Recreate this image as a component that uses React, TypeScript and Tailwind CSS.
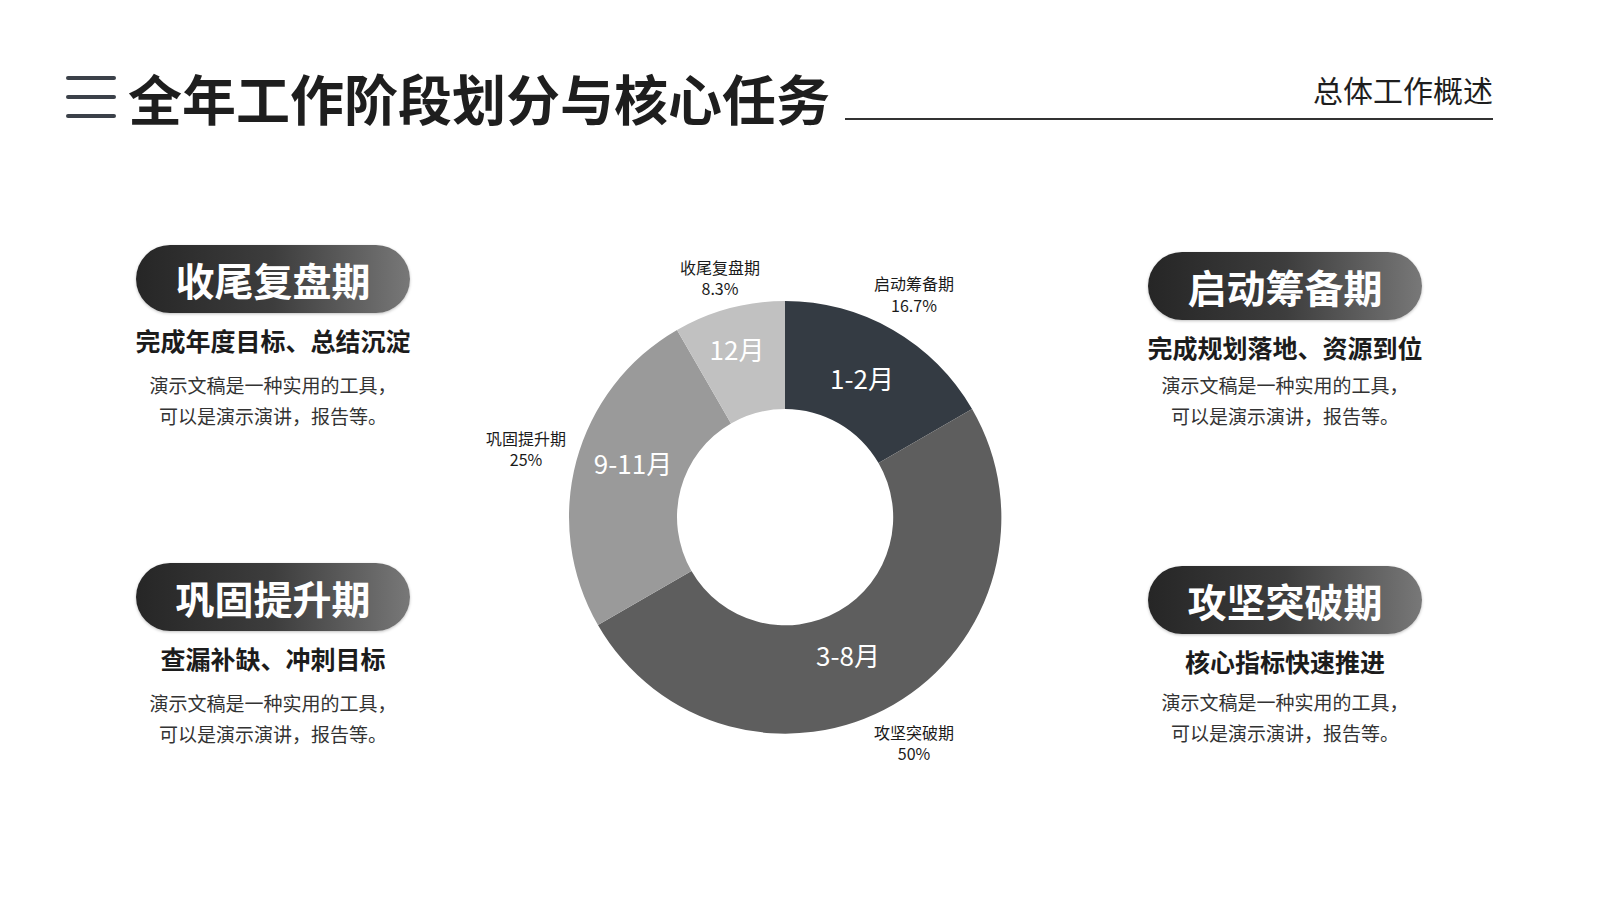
const FONT = { fontFamily: '"Noto Sans CJK SC", "Noto Sans", sans-serif' };

type Phase = {
  name: string;
  goal: string;
  pillTop: string;
  goalGap: string;
  bodyGap: string;
};

function PhaseCard({ phase }: { phase: Phase }) {
  return (
    <div className={`flex flex-col items-center ${phase.pillTop}`}>
      <div className="flex h-[68px] w-[274px] items-center justify-center rounded-full bg-linear-to-r from-[#262626] via-[#3d3d3d] to-[#787878] shadow-[0_1px_3px_rgba(0,0,0,0.25)]">
        <span className="text-[39px] font-bold leading-none text-white">{phase.name}</span>
      </div>
      <div className={`${phase.goalGap} text-[25px] font-bold leading-[26px] text-[#1c1c1c]`}>
        {phase.goal}
      </div>
      <div className={`${phase.bodyGap} text-center text-[19px] leading-[31px] text-[#333333]`}>
        <p>演示文稿是一种实用的工具，</p>
        <p>可以是演示演讲，报告等。</p>
      </div>
    </div>
  );
}

function DonutChart() {
  return (
    <svg width="640" height="560" viewBox="0 0 640 560">
      {/* 1-2月 */}
      <path d="M320 64 A216 216 0 0 1 507.06 172 L413.53 226 A108 108 0 0 0 320 172 Z" fill="#343b43" />
      {/* 3-8月 */}
      <path d="M507.06 172 A216 216 0 1 1 132.94 388 L226.47 334 A108 108 0 1 0 413.53 226 Z" fill="#5e5e5e" />
      {/* 9-11月 */}
      <path d="M132.94 388 A216 216 0 0 1 212 92.94 L266 186.47 A108 108 0 0 0 226.47 334 Z" fill="#9a9a9a" />
      {/* 12月 */}
      <path d="M212 92.94 A216 216 0 0 1 320 64 L320 172 A108 108 0 0 0 266 186.47 Z" fill="#c1c1c1" />

      <g fill="#ffffff" fontSize="26" textAnchor="middle" dominantBaseline="central">
        <text x="397" y="140">1-2月</text>
        <text x="383" y="417">3-8月</text>
        <text x="168" y="225">9-11月</text>
        <text x="272" y="111">12月</text>
      </g>

      <g fill="#1a1a1a" fontSize="16" textAnchor="middle" dominantBaseline="central">
        <text x="255" y="30">收尾复盘期</text>
        <text x="255" y="51">8.3%</text>
        <text x="449" y="46">启动筹备期</text>
        <text x="449" y="68">16.7%</text>
        <text x="61" y="201">巩固提升期</text>
        <text x="61" y="222">25%</text>
        <text x="449" y="495">攻坚突破期</text>
        <text x="449" y="516">50%</text>
      </g>
    </svg>
  );
}

export default function App() {
  const left: Phase[] = [
    { name: "收尾复盘期", goal: "完成年度目标、总结沉淀", pillTop: "mt-[120px]", goalGap: "mt-[14px]", bodyGap: "mt-[16px]" },
    { name: "巩固提升期", goal: "查漏补缺、冲刺目标", pillTop: "mt-[132px]", goalGap: "mt-[14px]", bodyGap: "mt-[16px]" },
  ];
  const right: Phase[] = [
    { name: "启动筹备期", goal: "完成规划落地、资源到位", pillTop: "mt-[127px]", goalGap: "mt-[14px]", bodyGap: "mt-[9px]" },
    { name: "攻坚突破期", goal: "核心指标快速推进", pillTop: "mt-[135px]", goalGap: "mt-[14px]", bodyGap: "mt-[12px]" },
  ];

  return (
    <div className="relative h-[900px] w-[1600px] overflow-hidden bg-white" style={FONT}>
      {/* Header */}
      <header className="flex items-start pl-[66px] pr-[107px] pt-[71px]">
        <svg width="50" height="44" viewBox="0 0 50 44" className="mt-[4px] shrink-0">
          <g stroke="#3b4149" strokeWidth="4" strokeLinecap="round">
            <line x1="2" y1="3" x2="48" y2="3" />
            <line x1="2" y1="22" x2="48" y2="22" />
            <line x1="2" y1="41" x2="48" y2="41" />
          </g>
        </svg>
        <h1 className="ml-[12px] text-[54px] font-bold leading-none text-[#1e1e1e]">
          全年工作阶段划分与核心任务
        </h1>
        <div className="ml-[15px] flex flex-1 flex-col">
          <div className="mt-[3px] text-right text-[30px] leading-none text-[#1e1e1e]">总体工作概述</div>
          <div className="mt-[14px] h-[2px] w-full bg-[#333333]" />
        </div>
      </header>

      {/* Body */}
      <main className="flex pl-[123px]">
        <div className="flex w-[300px] flex-col">
          {left.map((p) => (
            <PhaseCard key={p.name} phase={p} />
          ))}
        </div>

        <div className="ml-[42px] w-[640px] pt-[112px]">
          <DonutChart />
        </div>

        <div className="ml-[30px] flex w-[300px] flex-col">
          {right.map((p) => (
            <PhaseCard key={p.name} phase={p} />
          ))}
        </div>
      </main>
    </div>
  );
}
